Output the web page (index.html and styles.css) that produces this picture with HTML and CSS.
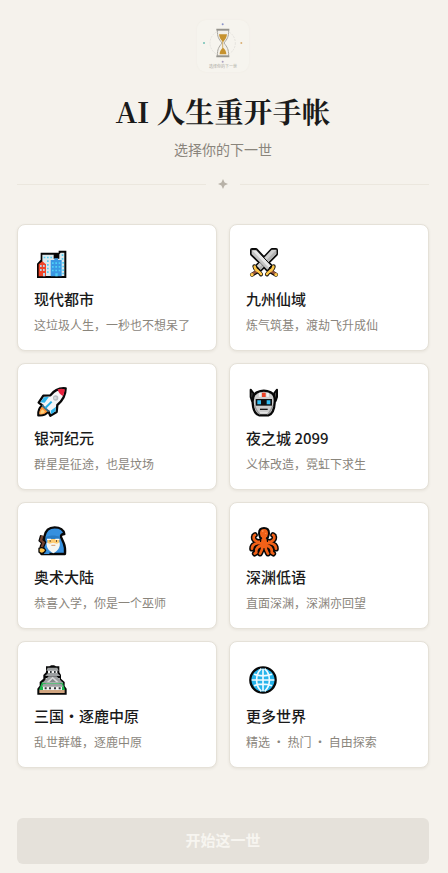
FILE: index.html
```html
<!DOCTYPE html>
<html lang="zh-CN">
<head>
<meta charset="utf-8">
<meta name="viewport" content="width=device-width, initial-scale=1">
<title>AI 人生重开手帐</title>
<link rel="stylesheet" href="styles.css">
</head>
<body>
<main class="page">
  <header class="header">
    <div class="logo">
      <svg class="logo-art" viewBox="0 0 156 156" aria-hidden="true">
        <circle cx="77" cy="69" r="38" fill="none" stroke="#dcdbd6" stroke-width="2" stroke-dasharray="6 3"/>
        <path d="M61 30h34c0 22-4 26-14 39 10 13 14 18 14 39H61c0-21 4-26 14-39-10-13-14-17-14-39z" fill="#f2efe8" stroke="#aaa8a1" stroke-width="3"/>
        <path d="M66 43h24c-1 12-7 17-12 24-5-7-11-12-12-24zM78 83c6 5 10 10 10 20H68c0-10 4-15 10-20z" fill="#c6922e"/>
        <path d="M77 64v22" stroke="#c6922e" stroke-width="2"/>
        <path d="M58 29h39M58 109h39" stroke="#96948d" stroke-width="5"/>
        <circle cx="77" cy="13" r="3" fill="#8a92c8"/><circle cx="77" cy="125" r="3" fill="#aaa0c2"/>
        <circle cx="21" cy="69" r="3" fill="#70c0b4"/><circle cx="133" cy="69" r="3" fill="#d9b075"/>
      </svg>
      <span class="logo-text">选择你的下一世</span>
    </div>
    <h1 class="title">AI 人生重开手帐</h1>
    <p class="subtitle">选择你的下一世</p>
    <div class="divider">
      <svg class="star" viewBox="0 0 10 10" aria-hidden="true"><path d="M5 0 6.6 3.4 10 5 6.6 6.6 5 10 3.4 6.6 0 5 3.4 3.4z"/></svg>
    </div>
  </header>

  <section class="worlds" aria-label="选择世界">
    <button class="card" type="button">
      <svg class="icon" viewBox="12 15 108 108" aria-hidden="true">
        <path d="M32 38h54v-6h23v82H21V71l11-12z" fill="#050505"/>
        <path d="M37 44h34v12h17V43l4-5h11v70H37z" fill="#dce8ec"/>
        <path d="M62 60h11v-5h11v5h11v49H62z" fill="#3997e3"/>
        <path d="M26 73l11-9 11 9v36H26z" fill="#ef4528"/>
        <path d="M41 50h5v5h-5zM51 50h5v5h-5zM61 50h5v5h-5zM51 61h5v5h-5zM51 72h5v5h-5zM51 83h5v5h-5zM51 94h5v5h-5zM95 43h5v5h-5zM95 54h5v5h-5zM97 66h5v5h-5zM97 77h5v5h-5zM97 88h5v5h-5zM97 98h5v5h-5zM66 67h5v5h-5zM76 67h5v5h-5zM86 67h5v5h-5zM66 78h5v5h-5zM76 78h5v5h-5zM86 78h5v5h-5zM66 89h5v5h-5zM76 89h5v5h-5zM86 89h5v5h-5zM76 100h7v9h-7z" fill="#4ed1f6"/>
        <path d="M30 75h5v6h-5zM39 75h5v6h-5zM30 87h5v6h-5zM39 87h5v6h-5zM39 99h6v10h-6z" fill="#b6d5ea"/>
      </svg>
      <span class="name">现代都市</span><span class="desc">这垃圾人生，一秒也不想呆了</span>
    </button>

    <button class="card" type="button">
      <svg class="icon" viewBox="12 15 108 108" aria-hidden="true">
        <g stroke="#080808" stroke-width="12" stroke-linejoin="round" stroke-linecap="round">
          <path d="M102 30v12L50 94l-10-10L90 30zM30 30v12l52 52 10-10L42 30z" fill="#080808"/>
          <path d="M50 92l-20 12M82 92l20 12M37 79c0 12 16 15 20 24M95 79c0 12-16 15-20 24" fill="none"/>
        </g>
        <path d="M103 29v13L56 89 44 77 89 29z" fill="#d0d0d0"/>
        <path d="M103 29v13L56 89l-5-5z" fill="#b2b2b2"/>
        <path d="M29 29v13l47 47 12-12L43 29z" fill="#e7e7e7" stroke="#080808" stroke-width="3"/>
        <path d="M29 29v13l47 47 5-5z" fill="#c4c4c4"/>
        <g fill="none" stroke-linecap="round">
          <path d="M47 92l-14 9M85 92l14 9" stroke="#96543a" stroke-width="8"/>
          <path d="M38 80c0 11 15 14 19 22M94 80c0 11-15 14-19 22" stroke="#ffc84b" stroke-width="8"/>
        </g>
        <circle cx="30" cy="104" r="5" fill="#ffc84b"/>
        <circle cx="102" cy="104" r="5" fill="#ffc84b"/>
      </svg>
      <span class="name">九州仙域</span><span class="desc">炼气筑基，渡劫飞升成仙</span>
    </button>

    <button class="card" type="button">
      <svg class="icon" viewBox="12 12 108 108" aria-hidden="true">
        <path d="M107 25c0 19-8 36-25 50l-2 21-19 11-6-13c-8 11-18 13-30 12-1-13 3-23 12-30l-11-8 14-21 21-1c12-16 27-23 46-21z" fill="#f4f5f6" stroke="#080808" stroke-width="7" stroke-linejoin="round"/>
        <path d="M83 28c7-2 14-2 21 0 0 7-2 13-5 20-9-4-14-10-16-20z" fill="#e92440"/>
        <path d="M57 50L44 68l-13-1 11-15zM78 80L62 92l2 11 12-9z" fill="#2db5ec"/>
        <path d="M37 79l16 15c-8 8-15 10-25 9 0-10 2-17 9-24z" fill="#ff9131"/>
        <path d="M38 88l7 7c-4 5-9 6-14 6 0-6 2-10 7-13z" fill="#ffd17a"/>
        <path d="M37 73l22 20-5 4-19-18z" fill="#3a6b85"/>
        <path d="M65 65L46 84" stroke="#23aee5" stroke-width="6"/>
        <circle cx="77" cy="54" r="8" fill="#b8bdc1"/><circle cx="76" cy="54" r="4" fill="#d5d9dc"/>
      </svg>
      <span class="name">银河纪元</span><span class="desc">群星是征途，也是坟场</span>
    </button>

    <button class="card" type="button">
      <svg class="icon" viewBox="12 12 108 108" aria-hidden="true">
        <path d="M26 29l8 10v24h-4l-4-12zM105 29l-8 10v24h4l4-12z" fill="#777" stroke="#080808" stroke-width="6" stroke-linejoin="round"/>
        <path d="M45 37c12-6 29-6 41 0 10 5 14 15 12 31-1 18-7 35-19 38H52c-13-3-19-20-20-38-1-16 3-26 13-31z" fill="#cdcdcd" stroke="#080808" stroke-width="7"/>
        <path d="M37 77c6 9 6 18 17 26M93 77c-6 9-6 18-17 26" fill="none" stroke="#999" stroke-width="4"/>
        <path d="M54 38v12M77 38v12" stroke="#f5f5f5" stroke-width="7"/>
        <path d="M60 38h11v13H60z" fill="#ed4328"/>
        <path d="M41 57h49v20H41z" fill="#101010"/>
        <path d="M46 61h11v12H46zM74 61h11v12H74z" fill="#32bdf2"/>
        <path d="M54 88h23" stroke="#171717" stroke-width="4"/>
        <path d="M54 98h23" stroke="#e4e4e4" stroke-width="4"/>
      </svg>
      <span class="name">夜之城 2099</span><span class="desc">义体改造，霓虹下求生</span>
    </button>

    <button class="card" type="button">
      <svg class="icon" viewBox="12 12 108 108" aria-hidden="true">
        <path d="M43 53c3-17 14-28 31-28 16 0 28 8 29 20-7 0-11 3-10 9l8 18c4 9 5 20 4 33H34c-1-14 3-25 9-34z" fill="#3690df" stroke="#080808" stroke-width="7" stroke-linejoin="round"/>
        <path d="M48 54c13-6 29-6 41 0l2 8H46z" fill="#287bc4"/>
        <path d="M52 60h36v22H52z" fill="#ffcc70"/>
        <path d="M50 70l8 4 11-3 12 3 8-4c2 14-3 25-19 33-15-8-22-18-20-33z" fill="#f5f6f2"/>
        <path d="M51 61h12M76 61h12" stroke="#fff" stroke-width="4"/>
        <path d="M59 66h3M78 66h3" stroke="#493225" stroke-width="4"/>
        <path d="M64 79h12" stroke="#d99a69" stroke-width="3"/>
        <path d="M37 50l-4 14 8 7-5 12 3 22" fill="none" stroke="#080808" stroke-width="14"/>
        <path d="M37 50l-4 14 8 7-5 12 3 20" fill="none" stroke="#73412e" stroke-width="7"/>
        <path d="M27 88c7-5 18-1 20 6-3 9-14 12-20 5z" fill="#ffc34c" stroke="#080808" stroke-width="4"/>
        <path d="M43 101c6 1 8-3 11-7l5 11H42z" fill="#358edc"/>
      </svg>
      <span class="name">奥术大陆</span><span class="desc">恭喜入学，你是一个巫师</span>
    </button>

    <button class="card" type="button">
      <svg class="icon" viewBox="12 12 108 108" aria-hidden="true">
        <g fill="none" stroke-linecap="round" stroke-linejoin="round">
          <path d="M61 66C47 72 34 65 35 54q0-4 4-6M71 66c14 6 27-1 26-12q0-4-4-6M59 72C42 71 30 77 30 89M73 72c17-1 29 5 29 17M59 79c-12 3-18 10-16 22l-5 3M73 79c12 3 18 10 16 22l5 3M62 81c-1 12-5 17-8 23M70 81c1 12 5 17 8 23" stroke="#080808" stroke-width="17"/>
          <path d="M61 66C47 72 34 65 35 54q0-4 4-6M71 66c14 6 27-1 26-12q0-4-4-6M59 72C42 71 30 77 30 89M73 72c17-1 29 5 29 17M59 79c-12 3-18 10-16 22l-5 3M73 79c12 3 18 10 16 22l5 3M62 81c-1 12-5 17-8 23M70 81c1 12 5 17 8 23" stroke="#f26118" stroke-width="8"/>
        </g>
        <path d="M57 66c0-9-6-13-6-23 0-11 6-16 15-16s15 6 15 16c0 10-6 14-6 23z" fill="#f26118" stroke="#080808" stroke-width="6"/>
        <path d="M59 58h14l4 22-8 7h-6l-8-7z" fill="#f26118"/>
        <path d="M57 55l2 5M75 55l-2 5" stroke="#111" stroke-width="4"/>
        <circle cx="62" cy="36" r="3" fill="#ff8c4b"/><circle cx="71" cy="43" r="2" fill="#ff8c4b"/>
      </svg>
      <span class="name">深渊低语</span><span class="desc">直面深渊，深渊亦回望</span>
    </button>

    <button class="card" type="button">
      <svg class="icon" viewBox="12 12 108 108" aria-hidden="true">
        <path d="M48 25h10l6-3h8l6 3h10v18l5 8v11l11 10v12l6 8v18H22V92l7-9V72l11-10V51l8-8z" fill="#080808"/>
        <path d="M36 72h62l7 24H27z" fill="#19b84b"/>
        <path d="M54 36h28v16H54zM47 60h42v16H47zM39 82h57v15H39z" fill="#f1f1f0"/>
        <path d="M53 29h29l4 9H49zM54 45l-9 9h46l-9-9zM56 55L36 76h64L80 55zM40 78l-5 8h65l-5-8z" fill="#9da0a1"/>
        <path d="M68 56L50 73h36z" fill="#d8d9d9"/>
        <path d="M68 62L58 72h20z" fill="#84888a"/>
        <path d="M60 39h5v6h-5zM72 39h5v6h-5zM44 88h6v6h-6zM57 88h6v6h-6zM72 88h6v6h-6zM86 88h6v6h-6z" fill="#34393b"/>
        <path d="M28 96h76v9H28z" fill="#d0a47f"/>
      </svg>
      <span class="name">三国・逐鹿中原</span><span class="desc">乱世群雄，逐鹿中原</span>
    </button>

    <button class="card" type="button">
      <svg class="icon" viewBox="12 12 108 108" aria-hidden="true">
        <circle cx="63" cy="66" r="38" fill="#26b4eb" stroke="#080808" stroke-width="7"/>
        <g fill="none" stroke="#eefaff" stroke-width="5">
          <path d="M63 32v68M29 66h68M36 49c18 6 36 6 54 0M36 83c18-6 36-6 54 0"/>
          <path d="M58 32c-19 18-19 50 0 68M68 32c19 18 19 50 0 68"/>
        </g>
      </svg>
      <span class="name">更多世界</span><span class="desc">精选 ・ 热门 ・ 自由探索</span>
    </button>
  </section>

  <button class="start" type="button" disabled>开始这一世</button>
</main>
</body>
</html>
```
FILE: styles.css
```css
* { box-sizing: border-box; }

body {
  margin: 0;
  background: #f5f2ec;
  color: #1a1a1a;
  font-family: "Noto Sans CJK SC", sans-serif;
}

button { font: inherit; }

.page { padding: 20px 19px 9px 17px; }

.header {
  display: flex;
  flex-direction: column;
  align-items: center;
}

.logo {
  position: relative;
  width: 52px;
  height: 52px;
  border-radius: 9px;
  background: #f6f4ee;
  box-shadow: 0 0 2px #eeebe4;
}

.logo-art { display: block; width: 100%; }

.logo-text {
  position: absolute;
  inset: auto 0 3px;
  color: #aaa8a2;
  font-size: 4px;
  line-height: 6px;
  text-align: center;
}

.title {
  margin: 19px 0 0;
  font-family: "Noto Serif SC", "Noto Serif CJK SC", "Liberation Serif", "Noto Sans CJK SC", serif;
  font-size: 29px;
  line-height: 40px;
  font-weight: 700;
}

.subtitle {
  margin: 8px 0 0;
  color: #8a857c;
  font-size: 14px;
  line-height: 20px;
}

.divider {
  display: flex;
  align-items: center;
  gap: 12px;
  width: 100%;
  height: 10px;
  margin: 20px 0 35px;
}

.divider::before,
.divider::after {
  content: "";
  flex: 1;
  height: 1px;
  background: #ebe7de;
}

.star { width: 10px; height: 10px; fill: #b8b2a8; }

.worlds {
  display: grid;
  grid-template-columns: repeat(2, minmax(0, 1fr));
  gap: 12px;
}

.card {
  display: flex;
  flex-direction: column;
  align-items: flex-start;
  padding: 20px 16px 16px;
  border: 1px solid #e5e1d8;
  border-radius: 8px;
  background: #fff;
  box-shadow: 0 1px 3px rgb(60 50 30 / 8%);
  color: #1a1a1a;
  text-align: left;
}

.icon { width: 36px; height: 36px; }

.name {
  margin-top: 6px;
  font-size: 15px;
  line-height: 24px;
  font-weight: 500;
}

.desc {
  margin-top: 5px;
  color: #8a857c;
  font-size: 12px;
  line-height: 18px;
}

.start {
  display: block;
  width: 100%;
  margin-top: 50px;
  padding: 10px 16px 12px;
  border: 0;
  border-radius: 6px;
  background: #e5e1da;
  color: #f7f5f0;
  font-size: 15px;
  line-height: 24px;
  font-weight: 700;
}
```
